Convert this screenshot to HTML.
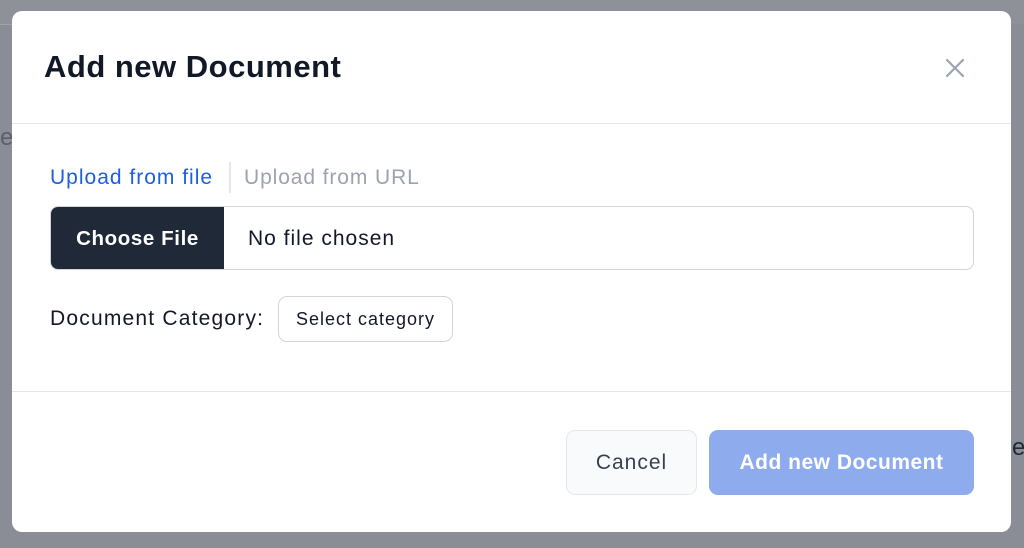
<!DOCTYPE html>
<html><head><meta charset="utf-8"><style>
*{box-sizing:border-box;margin:0;padding:0}
body{width:1024px;height:548px;background:#8a8d95;font-family:"Liberation Sans",sans-serif;position:relative;overflow:hidden}
.bg1{position:absolute;left:0;top:0;width:1024px;height:24px;background:#8e9198}
.bgline{position:absolute;left:0;top:24px;width:12px;height:1px;background:#a0a3aa}
.modal{position:absolute;left:12px;top:11px;width:999px;height:521px;background:#fff;border-radius:10px}
h1{position:absolute;left:32px;top:38px;font-size:31px;font-weight:700;color:#111827;letter-spacing:0.5px}
.close{position:absolute;left:932px;top:46px}
.hr1{position:absolute;left:0;top:112px;width:999px;height:1px;background:#e5e7eb}
.hr2{position:absolute;left:0;top:380px;width:999px;height:1px;background:#e5e7eb}
.tab1{position:absolute;left:38px;top:155px;font-size:21px;letter-spacing:1px;color:#1d5fe0}
.sep{position:absolute;left:217px;top:151px;width:2px;height:31px;background:#e5e7eb}
.tab2{position:absolute;left:232px;top:155px;font-size:21px;letter-spacing:0.9px;color:#9ca3af}
.file{position:absolute;left:38px;top:195px;width:924px;height:64px;border:1px solid #d1d5db;border-radius:8px;overflow:hidden}
.cf{position:absolute;left:0;top:0;width:173px;height:64px;background:#1f2937;color:#fff;font-size:20.5px;letter-spacing:0.6px;font-weight:700;display:flex;align-items:center;justify-content:center}
.nf{position:absolute;left:197px;top:20px;font-size:21px;letter-spacing:1px;color:#111827}
.lbl{position:absolute;left:38px;top:296px;font-size:21px;letter-spacing:1.2px;color:#111827}
.sel{position:absolute;left:266px;top:285px;width:175px;height:46px;border:1px solid #d1d5db;border-radius:9px;font-size:18px;letter-spacing:1px;color:#111827;display:flex;align-items:center;justify-content:center}
.cancel{position:absolute;left:554px;top:419px;width:131px;height:65px;border:1px solid #e5e7eb;border-radius:9px;background:#f9fafb;font-size:21px;letter-spacing:1px;color:#374151;display:flex;align-items:center;justify-content:center}
.add{position:absolute;left:697px;top:419px;width:265px;height:65px;border-radius:9px;background:#8eabed;font-size:21px;letter-spacing:0.5px;color:#fff;font-weight:700;display:flex;align-items:center;justify-content:center}
</style></head><body>
<div class="bg1"></div><div class="bgline"></div>
<div style="position:absolute;left:0;top:124px;font-size:24px;color:#5b5f68">e</div>
<div style="position:absolute;left:1012px;top:434px;font-size:24px;color:#1f2937">e</div>
<div class="modal">
<h1>Add new Document</h1>
<svg class="close" width="22" height="22" viewBox="0 0 22 22"><path d="M3 3L19 19M19 3L3 19" stroke="#9ca3af" stroke-width="2.2" stroke-linecap="round"/></svg>
<div class="hr1"></div>
<div class="tab1">Upload from file</div><div class="sep"></div><div class="tab2">Upload from URL</div>
<div class="file"><div class="cf">Choose File</div><div class="nf">No file chosen</div></div>
<div class="lbl">Document Category:</div>
<div class="sel">Select category</div>
<div class="hr2"></div>
<div class="cancel">Cancel</div>
<div class="add">Add new Document</div>
</div>
</body></html>
